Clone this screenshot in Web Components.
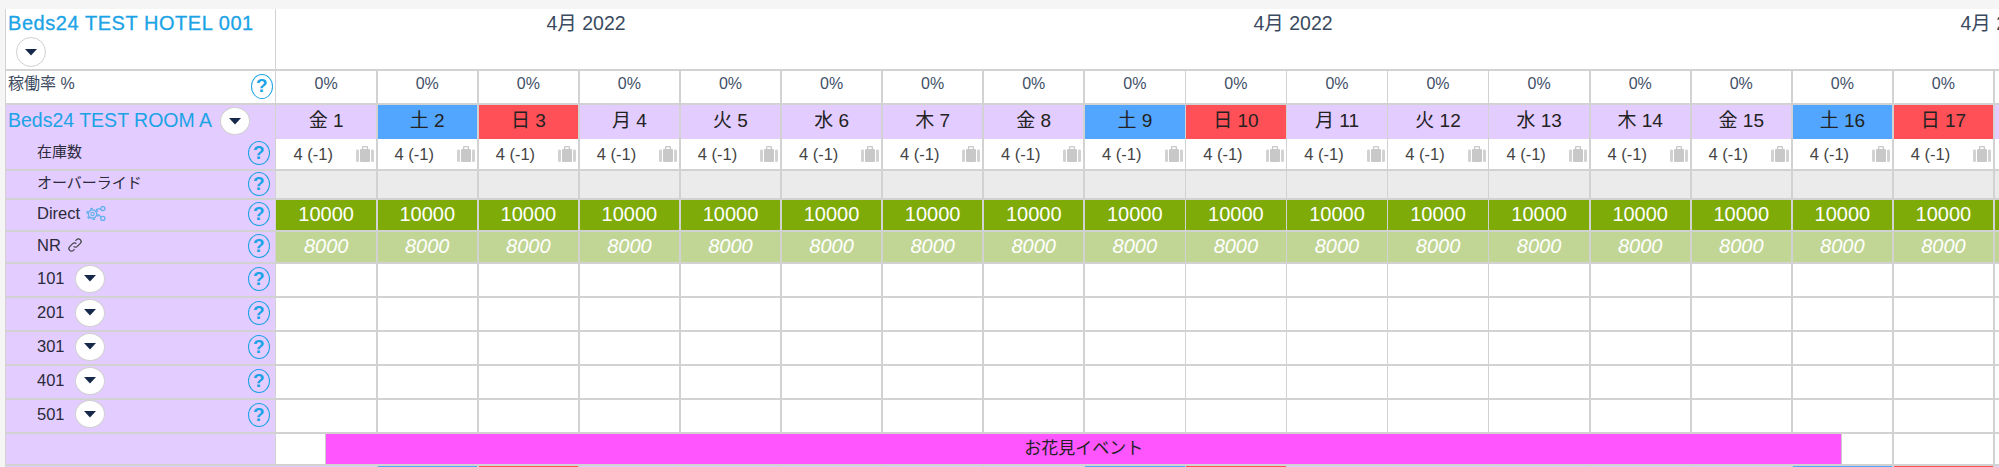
<!DOCTYPE html>
<html>
<head>
<meta charset="utf-8">
<style>
  html, body { margin: 0; padding: 0; background: #f5f5f5; }
  body {
    width: 1999px;
    height: 467px;
    overflow: hidden;
    font-family: "Liberation Sans", "Noto Sans CJK JP", sans-serif;
    color: #2b3a4e;
  }
</style>
</head>
<body>
<cal-grid></cal-grid>

<script>
const gridColumns = '268.8px repeat(18, 99.4px)';

class HelpIcon extends HTMLElement {
  constructor() {
    super();
    this.attachShadow({ mode: 'open' }).innerHTML = `
      <style>
        :host { display: block; flex: none; width: 22px; height: 24px; }
        :host([big]) { height: 25px; }
        div {
          box-sizing: border-box;
          width: 100%;
          height: 100%;
          border: 1.5px solid #1ba3e6;
          border-radius: 50%;
          color: #1ba3e6;
          font: bold 19px/21px "Liberation Sans", sans-serif;
          text-align: center;
        }
      </style>
      <div>?</div>
    `;
  }
}
customElements.define('help-icon', HelpIcon);

class DropButton extends HTMLElement {
  constructor() {
    super();
    this.attachShadow({ mode: 'open' }).innerHTML = `
      <style>
        :host { display: flex; flex: none; width: 30px; height: 28px; }
        :host([tall]) { height: 30px; }
        div {
          box-sizing: border-box;
          width: 100%;
          height: 100%;
          display: flex;
          align-items: center;
          justify-content: center;
          background: #fff;
          border: 1px solid #d0d0d0;
          border-radius: 50%;
        }
        svg { display: block; }
      </style>
      <div><svg width="12" height="7" viewBox="0 0 12 7"><path d="M0 0H12L6 6.5Z" fill="#16294a"/></svg></div>
    `;
  }
}
customElements.define('drop-button', DropButton);

class CalLabel extends HTMLElement {
  constructor() {
    super();
    this.attachShadow({ mode: 'open' }).innerHTML = `
      <style>
        :host {
          display: flex;
          align-items: center;
          box-sizing: border-box;
          background: #e3ccff;
          font-size: 16.5px;
          color: #2a2a3a;
          min-width: 0;
        }
        :host([indent]) { padding: 0 5px 0 31px; }
        :host([plain]) { background: #fff; padding: 0 2px 0 2px; color: #3b4a5e; font-size: 16px; }
        :host([room]) { padding: 0 0 0 2px; color: #1ba3e6; font-size: 19.5px; }
        :host([cjk]) { font-size: 15px; }
        .main { display: flex; align-items: center; gap: 6px; flex: 1; min-width: 0; white-space: nowrap; margin-top: -4px; line-height: 20px; }
        :host([plain]) .main { margin-top: -7px; }
        :host([room]) .main { margin-top: -4.4px; gap: 8px; }
        ::slotted(help-icon) { margin-top: -2px; }
        ::slotted(drop-button) { margin-top: 1px; }
      </style>
      <div class="main"><slot></slot></div>
      <slot name="end"></slot>
    `;
  }
}
customElements.define('cal-label', CalLabel);

class CalCell extends HTMLElement {
  constructor() {
    super();
    const kind = this.getAttribute('kind');
    this.attachShadow({ mode: 'open' }).innerHTML = `
      <style>
        :host {
          display: flex;
          align-items: center;
          justify-content: center;
          position: relative;
          box-sizing: border-box;
          background: #fff;
          font-size: 15px;
          color: #3a4a60;
          white-space: nowrap;
          min-width: 0;
        }
        :host([kind=pct]) { font-size: 16px; color: #3f5068; padding-bottom: 7px; }
        :host([kind=day]), :host([kind=sat]), :host([kind=sun]) { color: #222; font-size: 19px; padding-bottom: 7px; }
        :host([kind=day]) { background: #e3ccff; }
        :host([kind=sat]) { background: #52a6ff; }
        :host([kind=sun]) { background: #ff5057; }
        :host([kind=stock]) { color: #444; font-size: 16.5px; justify-content: flex-start; padding: 1px 0 0 17px; }
        :host([kind=over]) { background: #ebebeb; }
        :host([kind=price]) { background: #7eab07; color: #fff; font-size: 20px; padding-bottom: 1px; }
        :host([kind=nr]) { background: #c1d695; color: #fff; font-size: 20px; font-style: italic; padding-bottom: 2px; }
        svg { position: absolute; right: 2px; top: 7px; }
      </style>
      <slot></slot>
      ${kind === 'stock' ? `
        <svg width="18" height="16" viewBox="0 0 18 16">
          <path d="M6 3V1.2C6 .5 6.5 0 7.2 0h3.6c.7 0 1.2.5 1.2 1.2V3h-1.3V1.3H7.3V3Z" fill="#c8c8c8"/>
          <rect x="4" y="3" width="10" height="13" rx="1" fill="#c8c8c8"/>
          <rect x="0" y="3.5" width="3" height="12.5" rx="1.2" fill="#d2d2d2"/>
          <rect x="15" y="3.5" width="3" height="12.5" rx="1.2" fill="#d2d2d2"/>
        </svg>` : ''}
    `;
  }
}
customElements.define('cal-cell', CalCell);

class CalRow extends HTMLElement {
  constructor() {
    super();
    this.attachShadow({ mode: 'open' }).innerHTML = `
      <style>
        :host {
          display: grid;
          grid-template-columns: ${gridColumns};
          grid-auto-rows: 1fr;
          column-gap: 1.7px;
          box-sizing: border-box;
          height: var(--h, 32px);
          padding-bottom: 2px;
          background: #d2d2d2;
          overflow: hidden;
        }
      </style>
      <slot></slot>
    `;
  }
}
customElements.define('cal-row', CalRow);

class EventBar extends HTMLElement {
  constructor() {
    super();
    this.attachShadow({ mode: 'open' }).innerHTML = `
      <style>
        :host {
          display: flex;
          box-sizing: border-box;
          background: #fff;
          padding: 0 50px 0 49px;
          grid-column: 2 / span 16;
        }
        div {
          flex: 1;
          display: flex;
          align-items: center;
          justify-content: center;
          padding-bottom: 4px;
          background: #ff55ff;
          border-left: 1px solid #ccc;
          border-right: 1px solid #ccc;
          font-size: 17px;
          color: #222;
        }
      </style>
      <div><slot></slot></div>
    `;
  }
}
customElements.define('event-bar', EventBar);

class MonthHeader extends HTMLElement {
  constructor() {
    super();
    this.attachShadow({ mode: 'open' }).innerHTML = `
      <style>
        :host {
          display: flex;
          align-items: flex-start;
          background: #fff;
          padding: 3px 0 0 270px;
          overflow: hidden;
          grid-column: 2 / -1;
          font-size: 19.5px;
          line-height: 23px;
          color: #3a4a60;
          white-space: nowrap;
          min-width: 0;
        }
        ::slotted(span) { flex: none; width: 707px; }
      </style>
      <slot></slot>
    `;
  }
}
customElements.define('month-header', MonthHeader);

class HotelHeader extends HTMLElement {
  constructor() {
    super();
    this.attachShadow({ mode: 'open' }).innerHTML = `
      <style>
        :host {
          display: flex;
          flex-direction: column;
          align-items: flex-start;
          background: #fff;
          padding: 3px 0 0 2px;
          color: #1ba3e6;
          font-size: 20px;
          letter-spacing: 0.55px;
          -webkit-text-stroke: 0.3px #1ba3e6;
          white-space: nowrap;
        }
        drop-button { margin: 2px 0 0 8px; }
      </style>
      <slot></slot>
      <drop-button tall></drop-button>
    `;
  }
}
customElements.define('hotel-header', HotelHeader);

class CalGrid extends HTMLElement {
  constructor() {
    super();
    this.attachShadow({ mode: 'open' });
    this.days = ['金', '土', '日', '月', '火', '水', '木'];
  }

  connectedCallback() {
    this.render();
  }

  cells(kind, text) {
    let html = '';
    for (let i = 0; i < 18; i++) {
      html += `<cal-cell kind="${kind}">${text}</cal-cell>`;
    }
    return html;
  }

  dayCells() {
    let html = '';
    for (let i = 0; i < 18; i++) {
      const name = this.days[i % 7];
      const kind = name === '土' ? 'sat' : name === '日' ? 'sun' : 'day';
      html += `<cal-cell kind="${kind}">${name} ${i + 1}</cal-cell>`;
    }
    return html;
  }

  roomRow(number, h) {
    return `
      <cal-row style="--h:${h}px">
        <cal-label indent>${number}<drop-button style="margin-left:4px"></drop-button><help-icon slot="end"></help-icon></cal-label>
        ${this.cells('blank', '')}
      </cal-row>`;
  }

  render() {
    this.shadowRoot.innerHTML = `
      <style>
        :host {
          display: block;
          margin: 9px 0 0 5px;
          border-left: 1px solid #d2d2d2;
          height: 458px;
          overflow: hidden;
          background: #d2d2d2;
        }
      </style>
      <cal-row style="--h:62px">
        <hotel-header>Beds24 TEST HOTEL 001</hotel-header>
        <month-header><span>4月 2022</span><span>4月 2022</span><span>4月 2022</span></month-header>
      </cal-row>
      <cal-row style="--h:34px">
        <cal-label plain>稼働率 %<help-icon slot="end" big></help-icon></cal-label>
        ${this.cells('pct', '0%')}
      </cal-row>
      <cal-row style="--h:34px">
        <cal-label room>Beds24 TEST ROOM A<drop-button style="margin-top:3px"></drop-button></cal-label>
        ${this.dayCells()}
      </cal-row>
      <cal-row style="--h:32px">
        <cal-label indent cjk>在庫数<help-icon slot="end"></help-icon></cal-label>
        ${this.cells('stock', '4 (-1)')}
      </cal-row>
      <cal-row style="--h:29px">
        <cal-label indent cjk>オーバーライド<help-icon slot="end"></help-icon></cal-label>
        ${this.cells('over', '')}
      </cal-row>
      <cal-row style="--h:32px">
        <cal-label indent>Direct
          <svg width="20" height="15" viewBox="0 0 20 15" fill="none" stroke="#5fb0ec">
            <circle cx="6.5" cy="8" r="4.2" stroke-width="1.2"/>
            <circle cx="6.5" cy="8" r="5.6" stroke-width="1.5" stroke-dasharray="2.6 3.26"/>
            <circle cx="6.5" cy="8" r="1.7" stroke-width="1.1"/>
            <circle cx="16.8" cy="2.6" r="2.1" stroke-width="1.3"/>
            <circle cx="16.8" cy="12.4" r="2.1" stroke-width="1.3"/>
            <path d="M10.5 3.2l4.3-.4M12.5 8.6l2.7 2.4" stroke-width="1.2"/>
          </svg>
          <help-icon slot="end"></help-icon></cal-label>
        ${this.cells('price', '10000')}
      </cal-row>
      <cal-row style="--h:32px">
        <cal-label indent>NR
          <svg width="16" height="16" viewBox="0 0 16 16" fill="none" stroke="#444" stroke-width="1.2">
            <path d="M6.6 9.4a2.6 2.6 0 0 0 3.7 0l3-3a2.6 2.6 0 0 0-3.7-3.7L8.5 3.8"/>
            <path d="M9.4 6.6a2.6 2.6 0 0 0-3.7 0l-3 3a2.6 2.6 0 0 0 3.7 3.7l1.1-1.1"/>
          </svg>
          <help-icon slot="end"></help-icon></cal-label>
        ${this.cells('nr', '8000')}
      </cal-row>
      ${this.roomRow('101', 34)}
      ${this.roomRow('201', 34)}
      ${this.roomRow('301', 34)}
      ${this.roomRow('401', 34)}
      ${this.roomRow('501', 33.5)}
      <cal-row style="--h:32px">
        <cal-label></cal-label>
        <event-bar>お花見イベント</event-bar>
        <cal-cell></cal-cell>
        <cal-cell></cal-cell>
      </cal-row>
      <cal-row style="--h:34px">
        <cal-label></cal-label>
        ${this.dayCells()}
      </cal-row>
    `;
  }
}
customElements.define('cal-grid', CalGrid);
</script>
</body>
</html>
